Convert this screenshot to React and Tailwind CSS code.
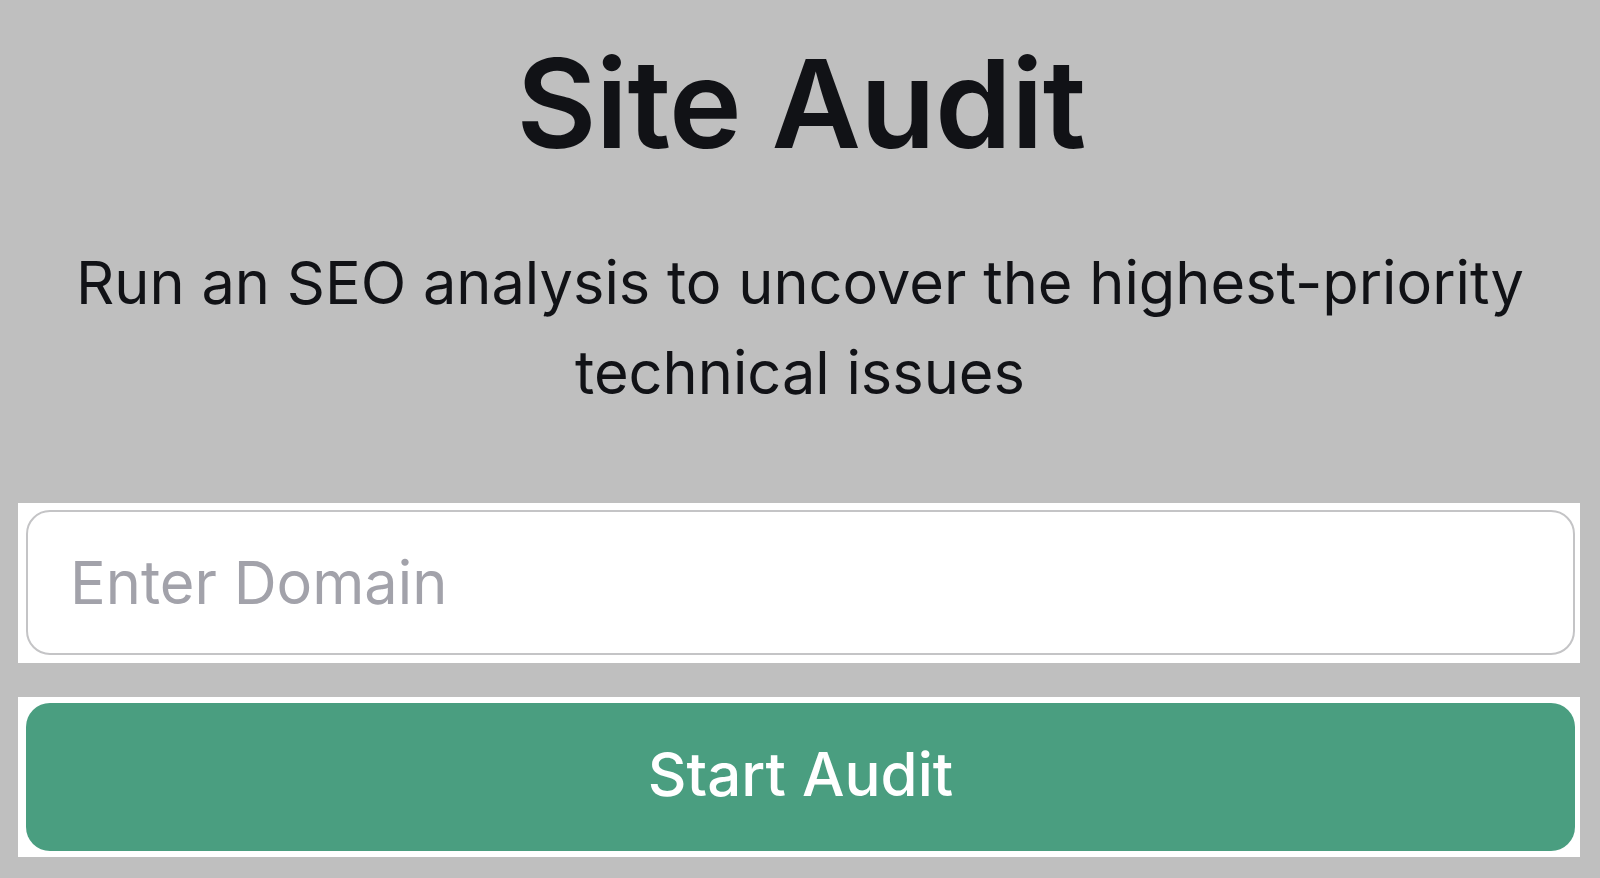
export default function App() {
  return (
    <div className="min-h-[878px] w-[1600px] bg-[#bfbfbf] overflow-hidden" style={{ fontFamily: 'Inter, "Noto Sans", sans-serif' }}>
      <div className="flex flex-col items-center pt-[42px]">
        <h1 className="text-[123px] leading-[123px] font-semibold text-[#111216] tracking-[-0.005em] pl-[2px]">Site Audit</h1>
        <p className="mt-[72px] text-[59.5px] leading-[90px] text-[#111216] text-center w-[1500px]">
          Run an SEO analysis to uncover the highest-priority technical issues
        </p>
      </div>
      <div className="mt-[86px] ml-[18px] w-[1562px] bg-white pt-[7px] pb-[8px] pl-[8px] pr-[5px]">
        <input
          type="text"
          placeholder="Enter Domain"
          className="block w-full h-[145px] rounded-[24px] border-2 border-[#c4c4c6] bg-white pl-[42px] pb-[2px] text-[59.5px] text-[#111216] placeholder:text-[#a2a2aa] outline-none"
        />
      </div>
      <div className="mt-[34px] ml-[18px] w-[1562px] bg-white pt-[6px] pb-[6px] pl-[8px] pr-[5px]">
        <button className="flex w-full h-[148px] items-center justify-center rounded-[24px] bg-[#4a9e80] pb-[6px] text-[60px] font-medium text-white">
          Start Audit
        </button>
      </div>
    </div>
  );
}
